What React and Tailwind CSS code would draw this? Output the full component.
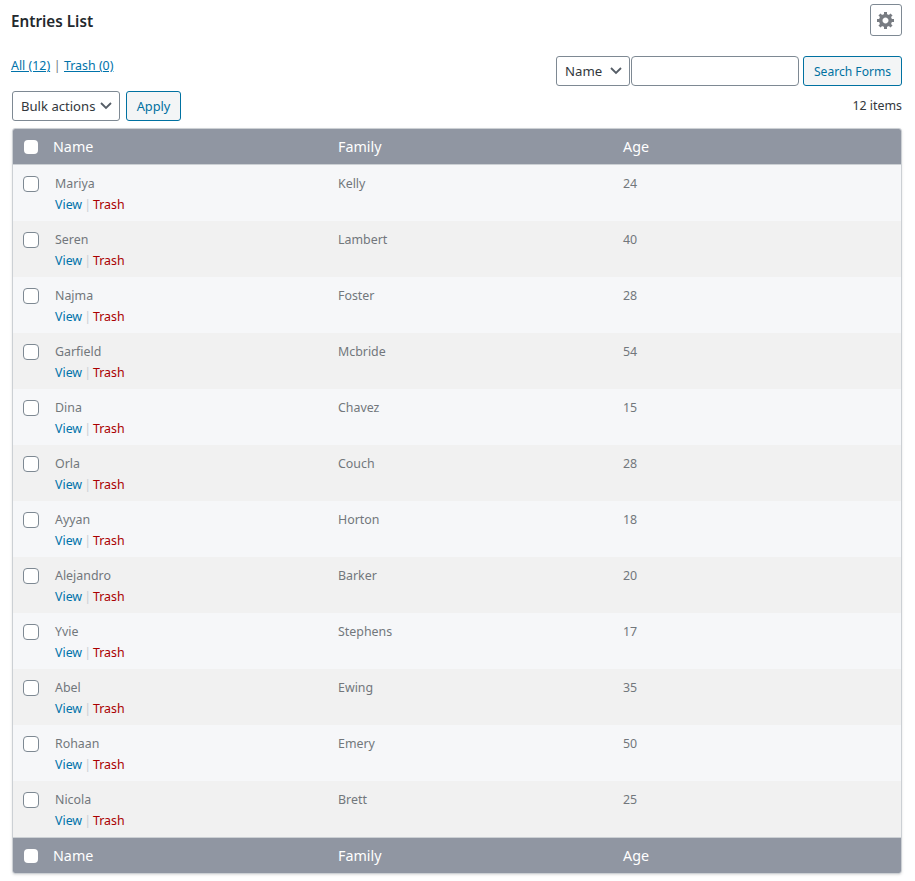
const entries = [
  ['Mariya', 'Kelly', 24],
  ['Seren', 'Lambert', 40],
  ['Najma', 'Foster', 28],
  ['Garfield', 'Mcbride', 54],
  ['Dina', 'Chavez', 15],
  ['Orla', 'Couch', 28],
  ['Ayyan', 'Horton', 18],
  ['Alejandro', 'Barker', 20],
  ['Yvie', 'Stephens', 17],
  ['Abel', 'Ewing', 35],
  ['Rohaan', 'Emery', 50],
  ['Nicola', 'Brett', 25],
]

function Gear() {
  return (
    <svg width="20" height="20" viewBox="0 0 20 20" fill="#787c82">
      <path d="M18 12h-2.18c-.17.7-.44 1.35-.81 1.93l1.54 1.54-2.1 2.1-1.54-1.54c-.58.36-1.23.63-1.91.79V19H8v-2.18c-.68-.16-1.33-.43-1.91-.79l-1.54 1.54-2.12-2.12 1.54-1.54c-.36-.58-.63-1.23-.79-1.91H1V9.03h2.17c.16-.7.44-1.35.8-1.94L2.43 5.55l2.1-2.1 1.54 1.54c.58-.37 1.24-.64 1.93-.81V2h3v2.18c.68.16 1.33.43 1.91.79l1.54-1.54 2.12 2.12-1.54 1.54c.36.59.64 1.24.8 1.94H18V12zm-8.5 1.5c1.66 0 3-1.34 3-3s-1.34-3-3-3-3 1.34-3 3 1.34 3 3 3z" />
    </svg>
  )
}

function Chevron() {
  return (
    <svg width="12" height="8" viewBox="0 0 12 8" fill="none" stroke="#555d66" strokeWidth="1.8">
      <polyline points="1,1 6,6 11,1" />
    </svg>
  )
}

function HeadRow({ border }) {
  return (
    <div className={`box-content flex h-[35px] items-center bg-[#9096a2] text-[14.3px] text-white ${border}`}>
      <div className="w-[40px] shrink-0 pl-[11px]">
        <span className="block h-[14px] w-[14px] rounded-[4px] bg-white" />
      </div>
      <div className="w-[285px] shrink-0">Name</div>
      <div className="w-[285px] shrink-0">Family</div>
      <div>Age</div>
    </div>
  )
}

function Row({ entry, index }) {
  const [name, family, age] = entry
  return (
    <div className={`flex h-[56px] items-start text-[12.4px] leading-[21px] text-[#72777c] ${index % 2 ? 'bg-[#f1f1f1]' : 'bg-[#f6f7f9]'}`}>
      <div className="w-[40px] shrink-0 pl-[10px] pt-[11px]">
        <span className="block h-[16px] w-[16px] rounded-[4px] border border-[#7e8993] bg-white" />
      </div>
      <div className="w-[285px] shrink-0 pl-[2px] pt-[8px]">
        <div>{name}</div>
        <div className="flex items-center">
          <a className="text-[#0073aa]">View</a>
          <span className="mx-[2px] text-[#ccd0d4]">|</span>
          <a className="text-[#a00]">Trash</a>
        </div>
      </div>
      <div className="w-[285px] shrink-0 pt-[8px]">{family}</div>
      <div className="pt-[8px]">{age}</div>
    </div>
  )
}

export default function App() {
  return (
    <div className="h-[881px] w-[915px] overflow-hidden bg-white text-[12.4px] text-[#32373c]" style={{ fontFamily: '"Noto Sans", sans-serif' }}>
      <div className="flex items-start justify-between pl-[11px] pr-[13px] pt-[4px]">
        <h1 className="pt-[5px] text-[15.25px] font-semibold leading-[24px] text-[#23282d]">Entries List</h1>
        <button className="flex h-[32px] w-[32px] items-center justify-center rounded-[3px] border border-[#7e8993] bg-white">
          <Gear />
        </button>
      </div>

      <div className="mt-[20px] flex items-start justify-between pl-[11px] pr-[13px]">
        <div className="leading-[19px] text-[#0073aa]">
          <a className="underline">All (12)</a>
          <span className="mx-[3.5px] text-[#72777c]">|</span>
          <a className="underline">Trash (0)</a>
        </div>
        <div className="flex items-center">
          <div className="flex h-[30px] w-[74px] items-center justify-between rounded-[3px] border border-[#7e8993] pl-[8px] pr-[7px] text-[13.2px]">
            <span className="pt-[2px]">Name</span>
            <Chevron />
          </div>
          <input className="ml-[1px] h-[30px] w-[168px] rounded-[4px] border border-[#7e8993] bg-white" />
          <button className="ml-[4px] h-[30px] w-[99px] rounded-[3px] border border-[#0071a1] bg-[#f3f5f6] pt-[3px] text-[12.1px] text-[#0071a1]">Search Forms</button>
        </div>
      </div>

      <div className="mt-[5px] flex items-center justify-between pl-[12px] pr-[13px]">
        <div className="flex items-center gap-[6px]">
          <div className="flex h-[30px] w-[108px] items-center justify-between whitespace-nowrap rounded-[3px] border border-[#7e8993] pl-[8px] pr-[7px] text-[13.1px]">
            <span className="pt-[2px]">Bulk actions</span>
            <Chevron />
          </div>
          <button className="h-[30px] w-[55px] rounded-[3px] border border-[#0071a1] bg-[#f3f5f6] pt-[2px] text-[12.8px] text-[#0071a1]">Apply</button>
        </div>
        <div className="self-start leading-[30px]">12 items</div>
      </div>

      <div className="ml-[12px] mt-[7px] w-[890px] overflow-hidden rounded-[3px] border border-[#ccd0d4] shadow-sm">
        <HeadRow border="border-b border-[#ccd0d4]" />
        {entries.map((entry, i) => (
          <Row key={entry[0]} entry={entry} index={i} />
        ))}
        <HeadRow border="border-t border-[#ccd0d4]" />
      </div>
    </div>
  )
}
